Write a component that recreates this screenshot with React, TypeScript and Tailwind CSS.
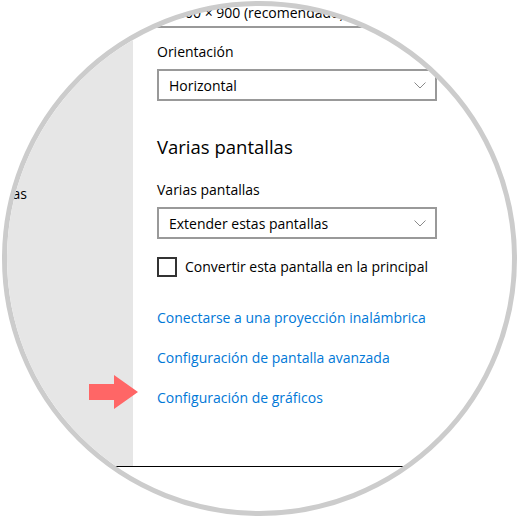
const font = { fontFamily: '"Open Sans", "Noto Sans", sans-serif' };

interface SelectBoxProps {
    value: string;
    className?: string;
};

const SelectBox = ({ value, className = "" }: SelectBoxProps) => {
    return (
        <div className={`w-[280px] h-[32px] border-2 border-[#999999] flex items-center justify-between pl-[10px] pr-[9px] text-[14px] text-black whitespace-nowrap ${className}`}>
            <span>{value}</span>
            <svg width="12" height="7" viewBox="0 0 12 7" className="mt-[1px]">
                <polyline points="0.5,0.5 6,6 11.5,0.5" fill="none" stroke="#8a8a8a" strokeWidth="1" />
            </svg>
        </div>
    )
}

const links = [
    "Conectarse a una proyección inalámbrica",
    "Configuración de pantalla avanzada",
    "Configuración de gráficos",
];

export default function App() {
    return (
        <div className="w-[520px] h-[520px] bg-white overflow-hidden" style={font}>
            <div className="ml-[2px] mt-[1px] w-[515px] h-[515px] rounded-full border-[5px] border-[#cccccc] overflow-hidden">
                <div className="-ml-[7px] -mt-[6px] w-[520px] relative">
                    <div className="flex h-[467px] border-b border-black">
                        {/* sidebar, mostly outside the circle */}
                        <div className="w-[133px] shrink-0 bg-[#e6e6e6] pt-[184px]">
                            <div className="flex justify-end pr-[106px] whitespace-nowrap text-[14px] leading-[20px] text-black">
                                Experiencias compartidas
                            </div>
                        </div>

                        {/* main */}
                        <div className="flex-1 pl-[24px] flex flex-col items-start text-black">
                            <SelectBox value="1600 × 900 (recomendado)" className="-mt-[4px]" />
                            <div className="mt-[14px] text-[14px] leading-[20px]">Orientación</div>
                            <SelectBox value="Horizontal" className="mt-[7px]" />
                            <div className="mt-[32px] text-[18.5px] leading-[28px]">Varias pantallas</div>
                            <div className="mt-[19px] text-[14px] leading-[20px]">Varias pantallas</div>
                            <SelectBox value="Extender estas pantallas" className="mt-[7px]" />
                            <label className="mt-[18px] flex items-center gap-[8px] text-[14px] leading-[20px] whitespace-nowrap">
                                <span className="w-[20px] h-[20px] border-2 border-[#333333] bg-white" />
                                Convertir esta pantalla en la principal
                            </label>
                            <div className="mt-[31px] flex flex-col gap-[20px]">
                                {links.map((l) => (
                                    <a key={l} className="text-[14px] leading-[20px] text-[#0078d7] whitespace-nowrap cursor-pointer">{l}</a>
                                ))}
                            </div>
                        </div>
                    </div>

                    {/* red arrow pointing at the last link */}
                    <svg className="absolute left-[89px] top-[375px]" width="49" height="34" viewBox="0 0 49 34">
                        <polygon points="0,9 25,9 25,0 49,17 25,34 25,25 0,25" fill="#ff6666" />
                    </svg>
                </div>
            </div>
        </div>
    )
}
